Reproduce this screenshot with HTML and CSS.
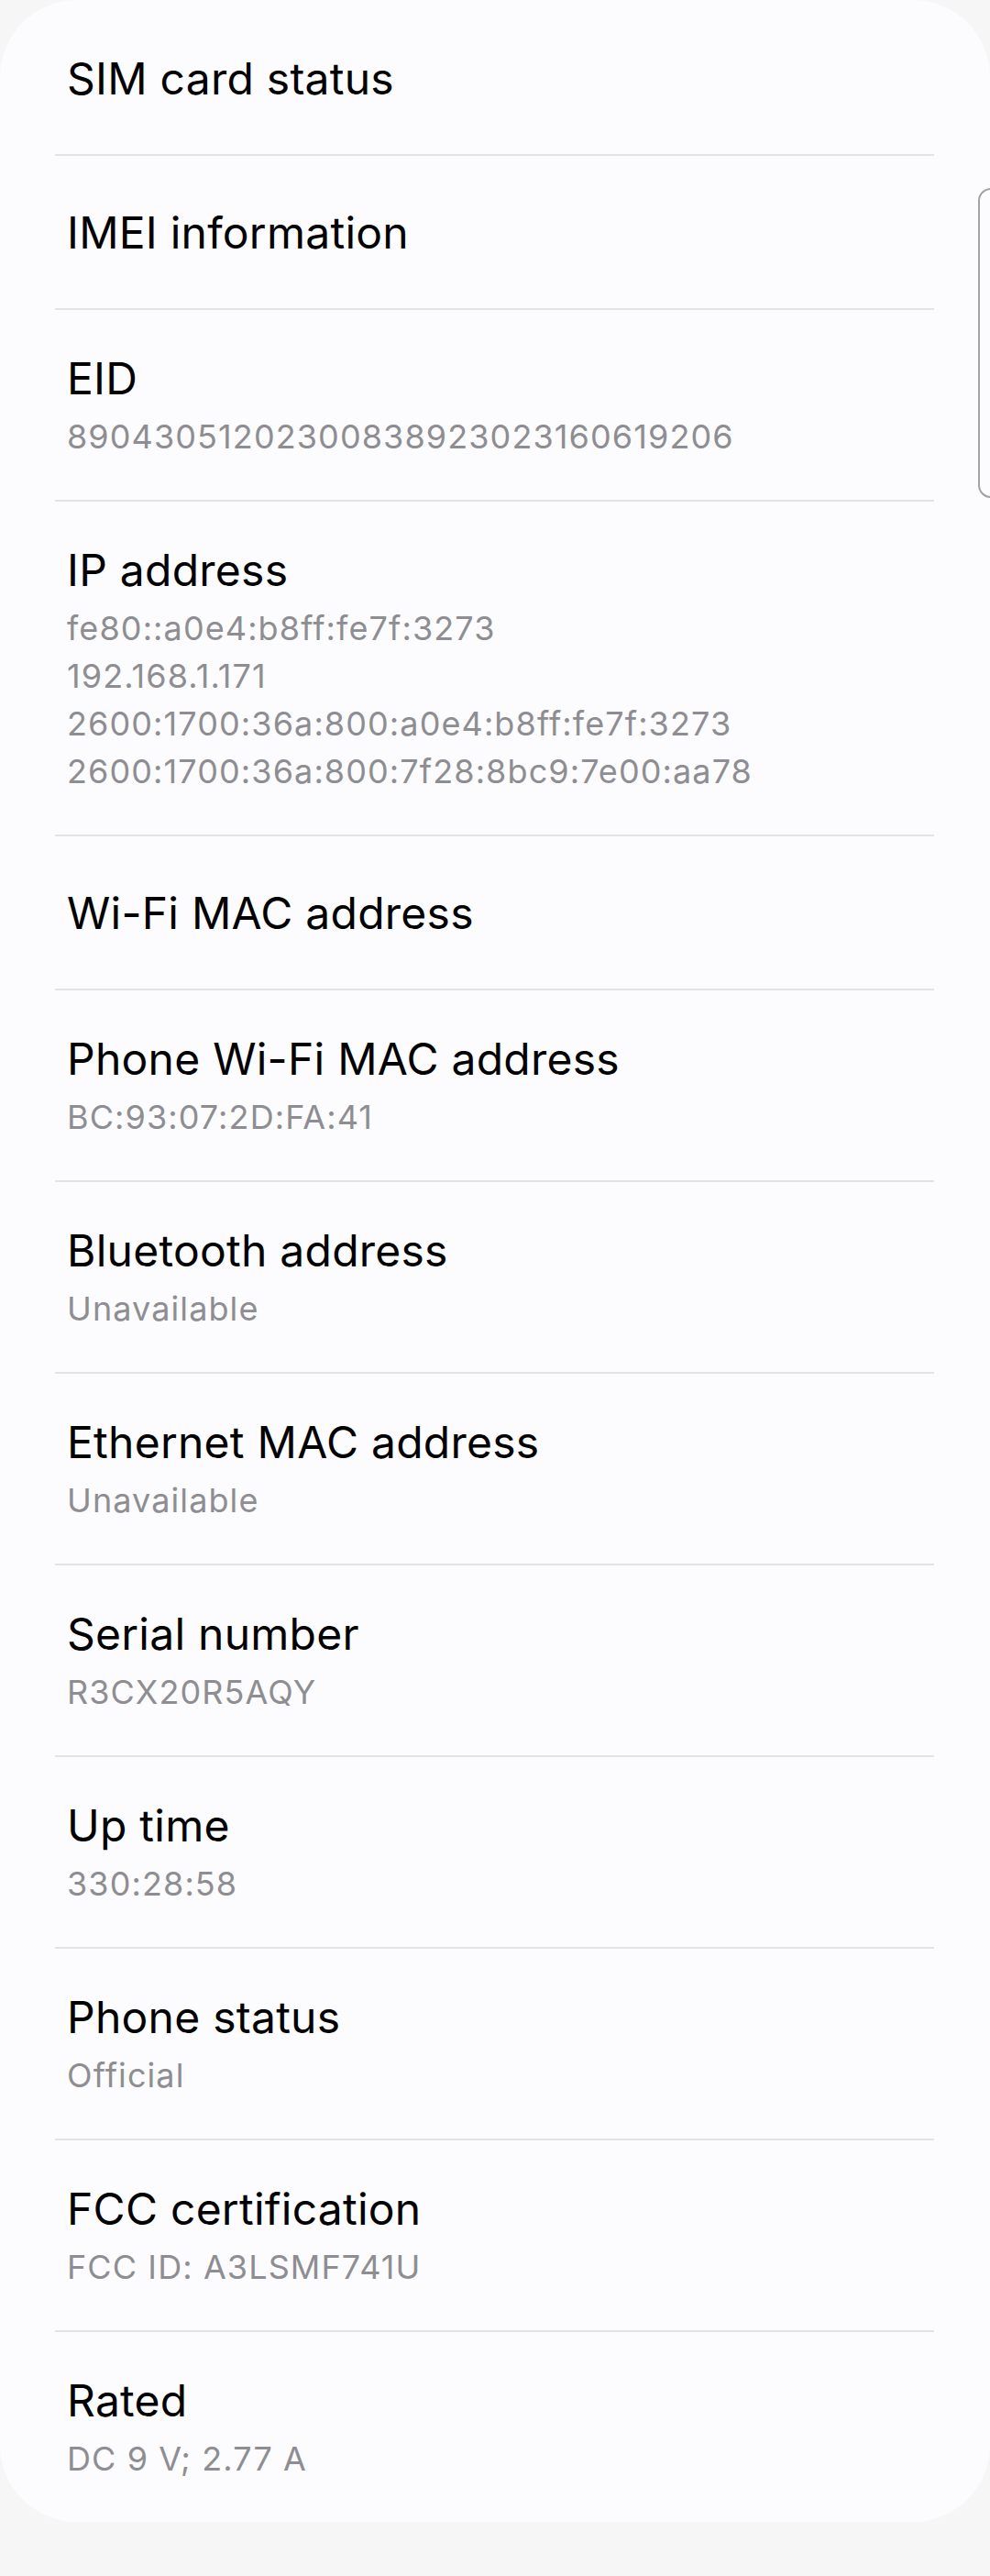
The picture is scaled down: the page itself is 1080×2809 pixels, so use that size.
FILE: index.html
```html
<!DOCTYPE html>
<html lang="en">
<head>
<meta charset="utf-8">
<title>About phone – Status</title>
<link rel="stylesheet" href="styles.css">
</head>
<body>
<main class="card">
  <div class="row"><div class="title">SIM card status</div></div>
  <div class="sep"></div>
  <div class="row"><div class="title">IMEI information</div></div>
  <div class="sep"></div>
  <div class="row two"><div class="title">EID</div><div class="sub">89043051202300838923023160619206</div></div>
  <div class="sep"></div>
  <div class="row two"><div class="title">IP address</div>
    <div class="sub">fe80::a0e4:b8ff:fe7f:3273</div>
    <div class="sub">192.168.1.171</div>
    <div class="sub">2600:1700:36a:800:a0e4:b8ff:fe7f:3273</div>
    <div class="sub">2600:1700:36a:800:7f28:8bc9:7e00:aa78</div>
  </div>
  <div class="sep"></div>
  <div class="row"><div class="title">Wi-Fi MAC address</div></div>
  <div class="sep"></div>
  <div class="row two"><div class="title">Phone Wi-Fi MAC address</div><div class="sub">BC:93:07:2D:FA:41</div></div>
  <div class="sep"></div>
  <div class="row two"><div class="title">Bluetooth address</div><div class="sub">Unavailable</div></div>
  <div class="sep"></div>
  <div class="row two"><div class="title">Ethernet MAC address</div><div class="sub">Unavailable</div></div>
  <div class="sep"></div>
  <div class="row two"><div class="title">Serial number</div><div class="sub">R3CX20R5AQY</div></div>
  <div class="sep"></div>
  <div class="row two"><div class="title">Up time</div><div class="sub">330:28:58</div></div>
  <div class="sep"></div>
  <div class="row two"><div class="title">Phone status</div><div class="sub">Official</div></div>
  <div class="sep"></div>
  <div class="row two"><div class="title">FCC certification</div><div class="sub">FCC ID: A3LSMF741U</div></div>
  <div class="sep"></div>
  <div class="row two"><div class="title">Rated</div><div class="sub">DC 9 V; 2.77 A</div></div>
</main>
<div class="scrollbar"></div>
</body>
</html>
```
FILE: styles.css
```css
html, body {
  margin: 0;
  padding: 0;
  background: #f6f6f7;
}
body {
  width: 1080px;
  min-height: 2809px;
  font-family: Inter, "Noto Sans", "Liberation Sans", sans-serif;
  position: relative;
}
.card {
  background: #fcfcfe;
  border-radius: 84px;
  padding-top: 2px;
  display: flex;
  flex-direction: column;
}
.row {
  box-sizing: border-box;
  min-height: 166px;
  padding: 45px 73px 43px;
  display: flex;
  flex-direction: column;
  justify-content: center;
}
.title {
  font-size: 48px;
  line-height: 60px;
  color: #000;
  letter-spacing: 0.25px;
}
.sub {
  font-size: 36px;
  line-height: 52px;
  color: #8e8e92;
  letter-spacing: 1.1px;
}
.title + .sub {
  margin-top: 7px;
}
.sep {
  height: 2px;
  margin: 0 61px 0 60px;
  background: #e3e3e6;
}
.scrollbar {
  position: absolute;
  left: 1067px;
  top: 205px;
  width: 30px;
  height: 334px;
  border: 2px solid #a3a3a6;
  border-radius: 14px;
}
```
